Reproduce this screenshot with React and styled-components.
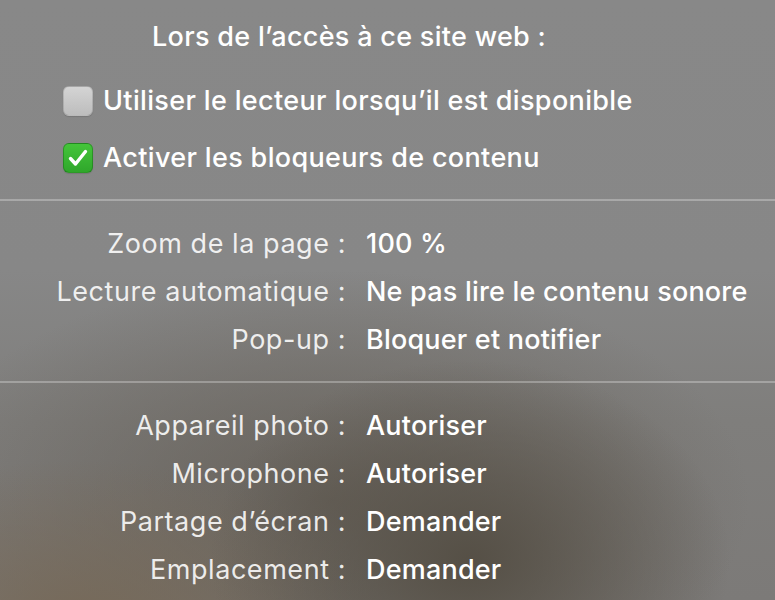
import React from 'react';
import styled, { createGlobalStyle } from 'styled-components';

const Global = createGlobalStyle`
  html, body { margin: 0; padding: 0; }
  body { font-family: Inter, "Liberation Sans", sans-serif; -webkit-font-smoothing: antialiased; }
`;

const Panel = styled.div`
  width: 775px;
  height: 600px;
  overflow: hidden;
  display: flex;
  flex-direction: column;
  background:
    radial-gradient(ellipse 260px 200px at 470px 560px, rgba(84, 78, 68, 0.95), rgba(84, 78, 68, 0) 100%),
    radial-gradient(ellipse 300px 160px at 80px 620px, rgba(118, 104, 86, 0.9), rgba(118, 104, 86, 0) 100%),
    radial-gradient(ellipse 420px 230px at 330px 500px, rgba(100, 94, 86, 0.85), rgba(100, 94, 86, 0) 100%),
    linear-gradient(180deg, #888888 0%, #878787 45%, #7f7e7c 70%, #7c7a78 100%);
`;

const Header = styled.section`
  display: flex;
  flex-direction: column;
  padding: 17px 0 13px 0;
`;

const Title = styled.h2`
  margin: 0 0 15px 152px;
  height: 40px;
  line-height: 40px;
  font-size: 27px;
  font-weight: 500;
  letter-spacing: 0.3px;
  color: #ffffff;
`;

const CheckRow = styled.label`
  display: flex;
  align-items: center;
  gap: 10px;
  height: 57px;
  padding-left: 63px;
  font-size: 27px;
  font-weight: 500;
  letter-spacing: 0.35px;
  color: #ffffff;
`;

const Box = styled.span`
  width: 30px;
  height: 30px;
  box-sizing: border-box;
  border-radius: 6px;
  display: flex;
  align-items: center;
  justify-content: center;
  background: ${p => p.$checked
    ? 'linear-gradient(180deg, #44c53a 0%, #2fa72b 100%)'
    : 'linear-gradient(180deg, #d4d4d4 0%, #bdbdbd 100%)'};
  border: 1px solid ${p => p.$checked ? 'rgba(20,100,20,0.45)' : 'rgba(0,0,0,0.12)'};
  box-shadow: 0 1px 1px rgba(0,0,0,0.12);
`;

const Divider = styled.hr`
  margin: 0;
  border: 0;
  height: 2px;
  background: rgba(255, 255, 255, 0.28);
`;

const Rows = styled.section`
  display: grid;
  grid-template-columns: 346px 1fr;
  column-gap: 20px;
  grid-auto-rows: 48px;
  align-items: center;
  padding: ${p => p.$pad};
`;

const Label = styled.span`
  text-align: right;
  font-size: 27px;
  font-weight: 400;
  letter-spacing: 0.55px;
  color: rgba(255, 255, 255, 0.88);
  white-space: nowrap;
`;

const Value = styled.span`
  font-size: 27px;
  font-weight: 500;
  letter-spacing: 0.2px;
  color: #ffffff;
  white-space: nowrap;
`;

const Check = () => (
  <svg width="24" height="24" viewBox="0 0 24 24">
    <path d="M4.5 12.5 L9.5 18 L19.5 5.5" fill="none" stroke="#fff" strokeWidth="3.4" strokeLinecap="round" strokeLinejoin="round" />
  </svg>
);

const Checkbox = ({ checked, children }) => (
  <CheckRow>
    <Box $checked={checked}>{checked && <Check />}</Box>
    {children}
  </CheckRow>
);

const general = [
  ['Zoom de la page :', '100 %'],
  ['Lecture automatique :', 'Ne pas lire le contenu sonore'],
  ['Pop-up :', 'Bloquer et notifier'],
];

const perms = [
  ['Appareil photo :', 'Autoriser'],
  ['Microphone :', 'Autoriser'],
  ['Partage d\u2019écran :', 'Demander'],
  ['Emplacement :', 'Demander'],
];

export default function App() {
  return (
    <>
      <Global />
      <Panel>
        <Header>
          <Title>Lors de l’accès à ce site web :</Title>
          <Checkbox checked={false}>Utiliser le lecteur lorsqu’il est disponible</Checkbox>
          <Checkbox checked>Activer les bloqueurs de contenu</Checkbox>
        </Header>
        <Divider />
        <Rows $pad="18px 0 18px 0">
          {general.map(([l, v]) => (
            <React.Fragment key={l}>
              <Label>{l}</Label>
              <Value>{v}</Value>
            </React.Fragment>
          ))}
        </Rows>
        <Divider />
        <Rows $pad="18px 0 0 0">
          {perms.map(([l, v]) => (
            <React.Fragment key={l}>
              <Label>{l}</Label>
              <Value>{v}</Value>
            </React.Fragment>
          ))}
        </Rows>
      </Panel>
    </>
  );
}
